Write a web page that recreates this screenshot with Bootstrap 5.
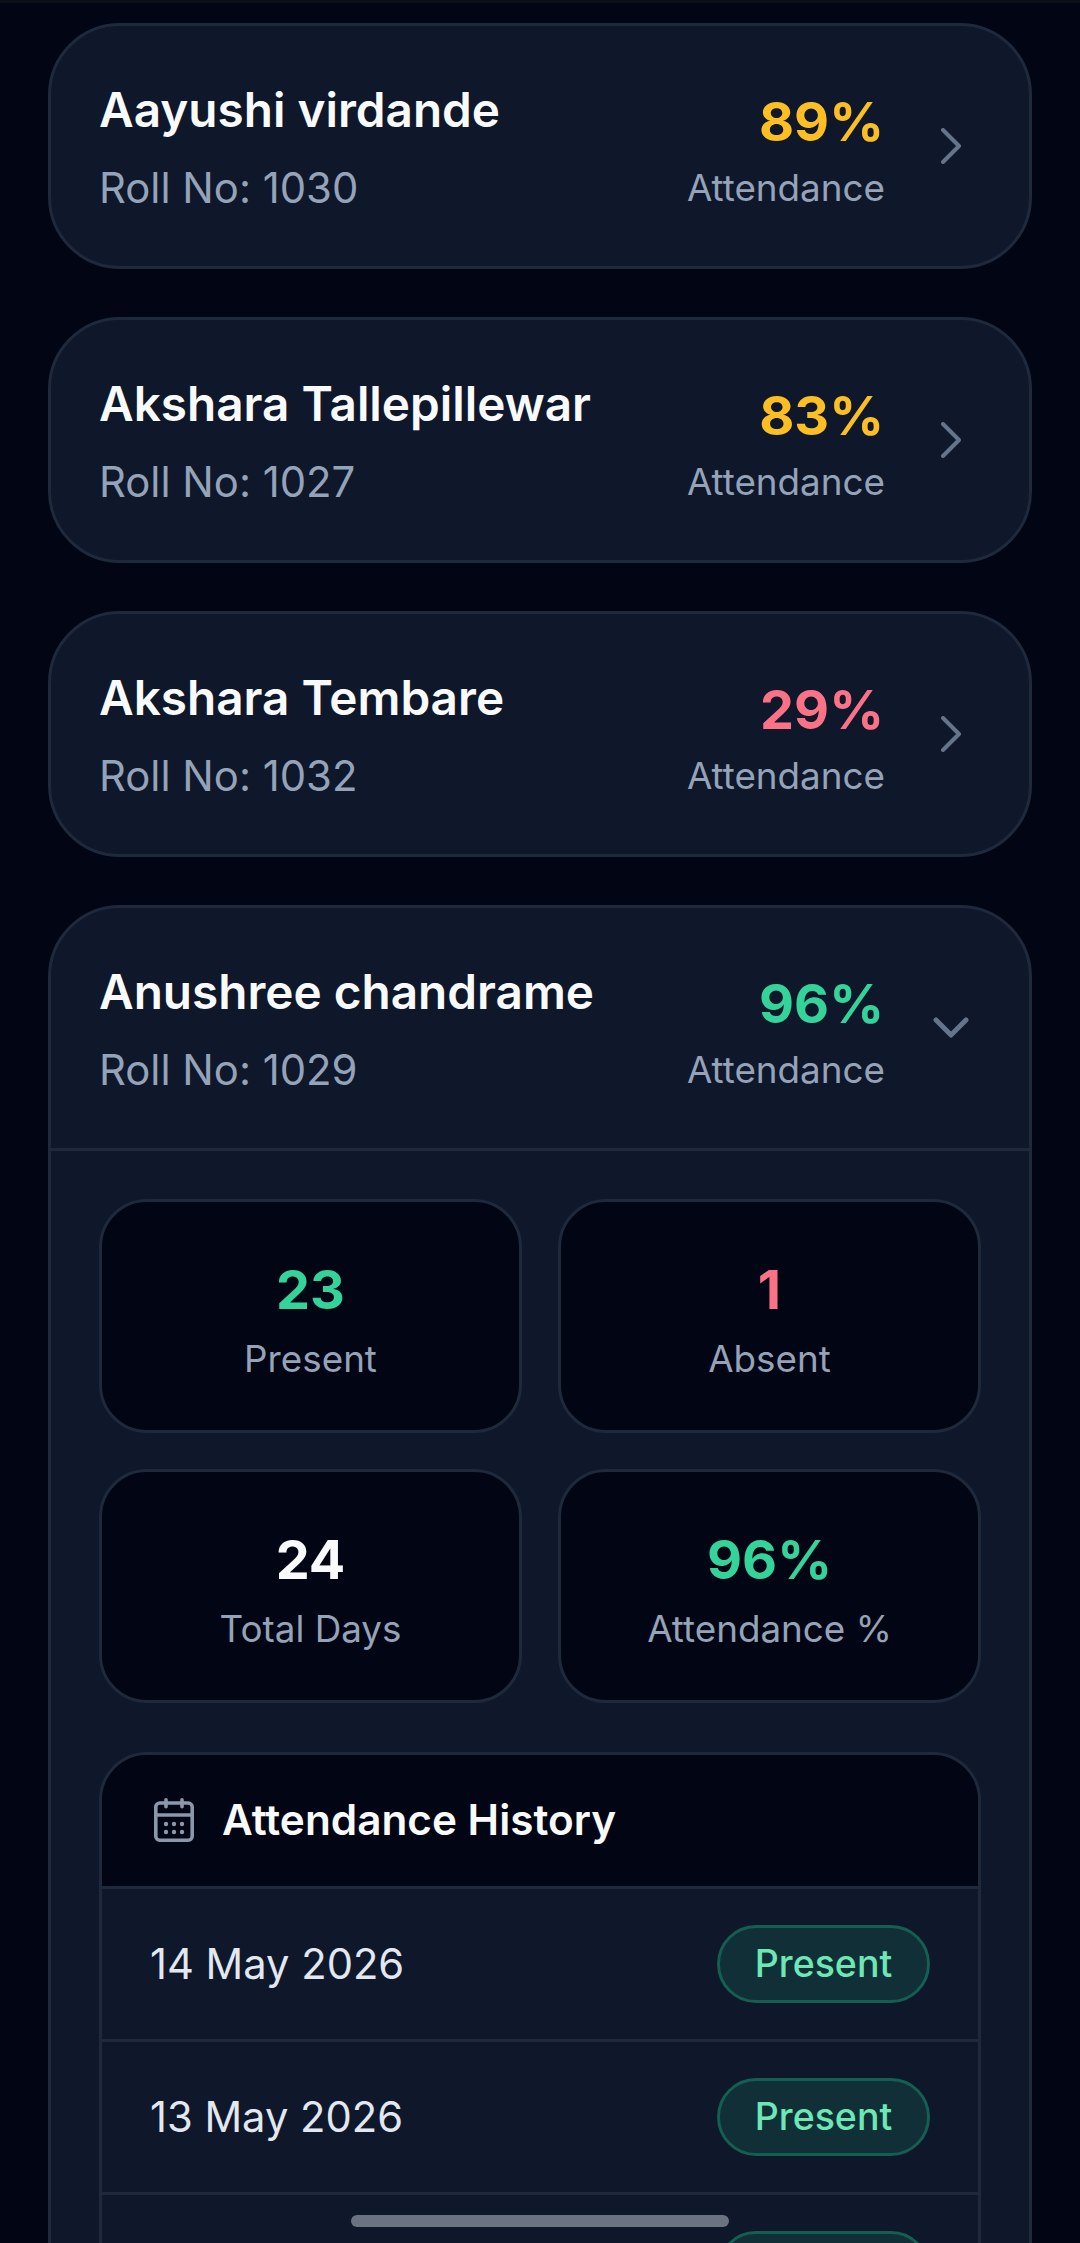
<!DOCTYPE html>
<html lang="en">
<head>
<meta charset="utf-8">
<title>Attendance</title>
<link rel="stylesheet" href="https://cdn.jsdelivr.net/npm/bootstrap@5.3.0/dist/css/bootstrap.min.css">
<style>
html,body{height:2243px;overflow:hidden;background:#020513;}
body{font-family:Inter,"Liberation Sans",sans-serif;color:#f1f5f9;}
.top-line{height:3px;background:#0c1019;}
.stud-list{padding:20px 48px 0;display:flex;flex-direction:column;gap:48px;}
.stud-card{background:#0f172a;border:3px solid #1e293b;border-radius:72px;}
.stud-card.open{overflow:hidden;}
.stud-head{height:240px;padding:0 48px;}
.open .stud-head{height:243px;border-bottom:3px solid #1e293b;}
.stud-name{font-size:47.7px;font-weight:600;line-height:58px;color:#f8fafc;margin-bottom:25px;}
.stud-roll{font-size:41.8px;line-height:48px;color:#94a3b8;}
.stud-score{padding-top:8px;}
.stud-pct{font-size:54px;font-weight:700;line-height:64px;text-align:right;margin-right:1px;margin-bottom:11px;}
.stud-lbl{font-size:36.8px;line-height:46px;color:#94a3b8;text-align:right;}
.c-amber{color:#fbbf24;}.c-rose{color:#fb7185;}.c-green{color:#34d399;}.c-white{color:#f8fafc;}
.stud-chev{width:48px;margin-left:42px;margin-right:6px;color:#64748b;}
.open-body{padding:48px;}
.stat-grid{display:grid;grid-template-columns:1fr 1fr;gap:36px;}
.stat-box{height:234px;padding-top:8px;background:#020513;border:3px solid #1e293b;border-radius:48px;}
.stat-num{font-size:54px;font-weight:700;line-height:64px;}
.stat-txt{font-size:36.8px;line-height:46px;color:#94a3b8;margin-top:14px;}
.hist-box{margin-top:49px;border:3px solid #1e293b;border-radius:48px;overflow:hidden;}
.hist-head{height:134px;background:#020513;border-bottom:3px solid #1e293b;padding:0 48px 2px 52px;gap:28px;font-size:42.3px;font-weight:600;color:#f8fafc;}
.hist-row{height:153px;padding:0 48px;border-bottom:3px solid #1e293b;font-size:41.7px;color:#e2e8f0;}
.pill-ok{height:78px;width:213px;padding-top:1px;border:3px solid #155e52;background:#112f36;border-radius:39px;color:#6ee7b7;font-size:37.5px;font-weight:500;}
.home-bar{position:fixed;left:351px;top:2215px;width:378px;height:12px;border-radius:6px;background:#6b7280;}
</style>
</head>
<body>
<div class="top-line"></div>
<div class="stud-list">
  <div class="stud-card">
    <div class="stud-head d-flex align-items-center">
      <div class="flex-grow-1"><div class="stud-name">Aayushi virdande</div><div class="stud-roll">Roll No: 1030</div></div>
      <div class="stud-score"><div class="stud-pct c-amber">89%</div><div class="stud-lbl">Attendance</div></div>
      <div class="stud-chev d-flex justify-content-center"><svg width="20" height="36" viewBox="0 0 20 36" fill="none" stroke="currentColor" stroke-width="4" stroke-linecap="round" stroke-linejoin="round"><path d="M2 2l16 16L2 34"/></svg></div>
    </div>
  </div>
  <div class="stud-card">
    <div class="stud-head d-flex align-items-center">
      <div class="flex-grow-1"><div class="stud-name">Akshara Tallepillewar</div><div class="stud-roll">Roll No: 1027</div></div>
      <div class="stud-score"><div class="stud-pct c-amber">83%</div><div class="stud-lbl">Attendance</div></div>
      <div class="stud-chev d-flex justify-content-center"><svg width="20" height="36" viewBox="0 0 20 36" fill="none" stroke="currentColor" stroke-width="4" stroke-linecap="round" stroke-linejoin="round"><path d="M2 2l16 16L2 34"/></svg></div>
    </div>
  </div>
  <div class="stud-card">
    <div class="stud-head d-flex align-items-center">
      <div class="flex-grow-1"><div class="stud-name">Akshara Tembare</div><div class="stud-roll">Roll No: 1032</div></div>
      <div class="stud-score"><div class="stud-pct c-rose">29%</div><div class="stud-lbl">Attendance</div></div>
      <div class="stud-chev d-flex justify-content-center"><svg width="20" height="36" viewBox="0 0 20 36" fill="none" stroke="currentColor" stroke-width="4" stroke-linecap="round" stroke-linejoin="round"><path d="M2 2l16 16L2 34"/></svg></div>
    </div>
  </div>
  <div class="stud-card open">
    <div class="stud-head d-flex align-items-center">
      <div class="flex-grow-1"><div class="stud-name">Anushree chandrame</div><div class="stud-roll">Roll No: 1029</div></div>
      <div class="stud-score"><div class="stud-pct c-green">96%</div><div class="stud-lbl">Attendance</div></div>
      <div class="stud-chev d-flex justify-content-center"><svg width="36" height="22" viewBox="0 0 36 22" fill="none" stroke="currentColor" stroke-width="5" stroke-linecap="round" stroke-linejoin="round"><path d="M3 3l15 15L33 3"/></svg></div>
    </div>
    <div class="open-body">
      <div class="stat-grid">
        <div class="stat-box d-flex flex-column align-items-center justify-content-center"><div class="stat-num c-green">23</div><div class="stat-txt">Present</div></div>
        <div class="stat-box d-flex flex-column align-items-center justify-content-center"><div class="stat-num c-rose">1</div><div class="stat-txt">Absent</div></div>
        <div class="stat-box d-flex flex-column align-items-center justify-content-center"><div class="stat-num c-white">24</div><div class="stat-txt">Total Days</div></div>
        <div class="stat-box d-flex flex-column align-items-center justify-content-center"><div class="stat-num c-green">96%</div><div class="stat-txt">Attendance %</div></div>
      </div>
      <div class="hist-box">
        <div class="hist-head d-flex align-items-center">
          <svg width="40" height="44" viewBox="0 0 40 44" fill="none" stroke="#8b97ab" stroke-width="3.6" stroke-linecap="round" stroke-linejoin="round"><rect x="1.8" y="5" width="36.4" height="37.2" rx="4"/><path d="M1.8 17h36.4M12 1.8v7M28 1.8v7"/><g fill="#8b97ab" stroke="none"><circle cx="12" cy="26" r="2.2"/><circle cx="20" cy="26" r="2.2"/><circle cx="28" cy="26" r="2.2"/><circle cx="12" cy="34" r="2.2"/><circle cx="20" cy="34" r="2.2"/><circle cx="28" cy="34" r="2.2"/></g></svg>
          <span>Attendance History</span>
        </div>
        <div class="hist-row d-flex align-items-center justify-content-between"><span>14 May 2026</span><span class="pill-ok d-flex align-items-center justify-content-center">Present</span></div>
        <div class="hist-row d-flex align-items-center justify-content-between"><span>13 May 2026</span><span class="pill-ok d-flex align-items-center justify-content-center">Present</span></div>
        <div class="hist-row d-flex align-items-center justify-content-between"><span>12 May 2026</span><span class="pill-ok d-flex align-items-center justify-content-center">Present</span></div>
      </div>
    </div>
  </div>
</div>
<div class="home-bar"></div>
<script src="https://cdn.jsdelivr.net/npm/bootstrap@5.3.0/dist/js/bootstrap.bundle.min.js"></script>
</body>
</html>
